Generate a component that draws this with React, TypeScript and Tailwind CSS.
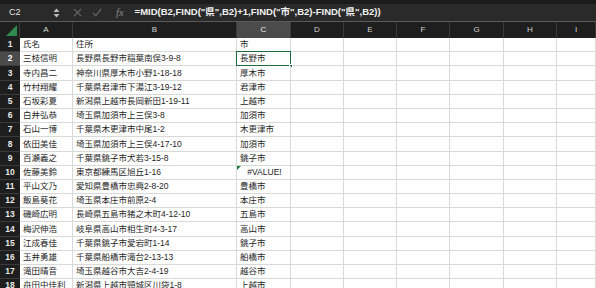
const COLS = ['A', 'B', 'C', 'D', 'E', 'F', 'G', 'H', 'I'];

const ROWS: [string, string, string][] = [
  ['氏名', '住所', '市'],
  ['三枝信明', '長野県長野市稲葉南俣3-9-8', '長野市'],
  ['寺内昌二', '神奈川県厚木市小野1-18-18', '厚木市'],
  ['竹村翔耀', '千葉県君津市下湯江3-19-12', '君津市'],
  ['石坂彩夏', '新潟県上越市長岡新田1-19-11', '上越市'],
  ['白井弘恭', '埼玉県加須市上三俣3-8', '加須市'],
  ['石山一博', '千葉県木更津市中尾1-2', '木更津市'],
  ['依田美佳', '埼玉県加須市上三俣4-17-10', '加須市'],
  ['百瀬義之', '千葉県銚子市犬若3-15-8', '銚子市'],
  ['佐藤美鈴', '東京都練馬区旭丘1-16', '#VALUE!'],
  ['平山文乃', '愛知県豊橋市忠興2-8-20', '豊橋市'],
  ['飯島葵花', '埼玉県本庄市前原2-4', '本庄市'],
  ['磯崎広明', '長崎県五島市猪之木町4-12-10', '五島市'],
  ['梅沢伸浩', '岐阜県高山市相生町4-3-17', '高山市'],
  ['江成春佳', '千葉県銚子市愛宕町1-14', '銚子市'],
  ['玉井勇雄', '千葉県船橋市滝台2-13-13', '船橋市'],
  ['滝田晴音', '埼玉県越谷市大吉2-4-19', '越谷市'],
  ['舟田中佳利', '新潟県上越市頸城区川袋1-8', '上越市'],
];

const GRID = 'grid grid-cols-[20px_53px_164px_54px_53px_53px_53px_54px_53px_1fr]';
const JP = "font-['Liberation_Sans','Noto_Sans_CJK_JP',sans-serif]";

function FormulaBar() {
  return (
    <div className="bg-[#1b1b1b] pt-[4px]">
      <div className={`flex items-center h-[17px] bg-[#2a2a2a] text-[9px] ${JP}`}>
        <span className="w-[48px] pl-[9px] text-[#e6e6e6]">C2</span>
        <svg width="7" height="10" viewBox="0 0 7 10" className="ml-[5px]">
          <path d="M3.5 0.5 L6.5 4 L0.5 4 Z" fill="#bdbdbd" />
          <path d="M0.5 6 L6.5 6 L3.5 9.5 Z" fill="#bdbdbd" />
        </svg>
        <svg width="9" height="9" viewBox="0 0 9 9" className="ml-[13px]">
          <path d="M1 1 L8 8 M8 1 L1 8" stroke="#5f5f5f" strokeWidth="1.4" />
        </svg>
        <svg width="10" height="9" viewBox="0 0 10 9" className="ml-[10px]">
          <path d="M1 5 L3.8 7.8 L9 1" stroke="#5f5f5f" strokeWidth="1.4" fill="none" />
        </svg>
        <span className="ml-[14px] text-[10.5px] italic text-[#8a8a8a] font-['Liberation_Serif',serif]">fx</span>
        <span className="ml-[11px] text-[#f2f2f2] text-[9.5px] font-semibold whitespace-nowrap">
          =MID(B2,FIND("県",B2)+1,FIND("市",B2)-FIND("県",B2))
        </span>
      </div>
    </div>
  );
}

function HeaderRow() {
  return (
    <div className={`${GRID} h-[17px] bg-[#1e1e1e] border-t border-[#5a5a5a] text-[8px] text-[#d4d4d4] font-['Liberation_Sans',sans-serif]`}>
      <div className="relative border-r border-[#3a3a3a]">
        <div className="absolute right-[2px] bottom-[2px] w-0 h-0 border-l-[11px] border-l-transparent border-b-[11px] border-b-[#2f8a4e]" />
      </div>
      {COLS.map(c => (
        <div
          key={c}
          className={`flex items-center justify-center border-r border-[#3a3a3a] ${c === 'C' ? 'bg-[#4b4b4b] text-[#f0f0f0]' : ''}`}
        >
          {c}
        </div>
      ))}
    </div>
  );
}

function Row({ n, data }: { n: number; data: [string, string, string] }) {
  const selected = n === 2;
  const isError = data[2] === '#VALUE!';
  return (
    <div className={`${GRID} h-[14.2px] text-[8.5px] text-[#1f1f1f] ${JP}`}>
      <div
        className={`flex items-center justify-center text-[8.5px] font-bold border-b border-[#3a3a3a] font-['Liberation_Sans',sans-serif] ${selected ? 'bg-[#4b4b4b] text-white' : 'bg-[#1e1e1e] text-[#e8e8e8]'}`}
      >
        {n}
      </div>
      <div className="flex items-center pl-[3px] border-r border-b border-[#d9d9d9] bg-white whitespace-nowrap overflow-hidden">{data[0]}</div>
      <div className="flex items-center pl-[3px] border-r border-b border-[#d9d9d9] bg-white whitespace-nowrap overflow-hidden">{data[1]}</div>
      <div className="relative flex items-center border-r border-b border-[#d9d9d9] bg-white whitespace-nowrap">
        {isError ? (
          <>
            <div className="absolute left-0 top-0 w-0 h-0 border-r-[4px] border-r-transparent border-t-[4px] border-t-[#1e7a3c]" />
            <span className="w-full text-center pl-[2px] font-['Liberation_Sans',sans-serif] text-[8.5px] text-[#222]">#VALUE!</span>
          </>
        ) : (
          <span className="pl-[3px]">{data[2]}</span>
        )}
        {selected && (
          <>
            <div className="absolute -left-[1px] -top-[1px] right-[-1px] bottom-[-1px] border-[1.5px] border-[#1d6b3f]" />
            <div className="absolute right-[-3px] bottom-[-3px] w-[4px] h-[4px] bg-[#1d6b3f] border border-white" />
          </>
        )}
      </div>
      {[0, 1, 2, 3, 4, 5].map(i => (
        <div key={i} className="border-r border-b border-[#d9d9d9] bg-white" />
      ))}
    </div>
  );
}

export default function App() {
  return (
    <div className="w-[596px] h-[288px] overflow-hidden bg-white">
      <FormulaBar />
      <HeaderRow />
      {ROWS.map((r, i) => (
        <Row key={i} n={i + 1} data={r} />
      ))}
    </div>
  );
}
